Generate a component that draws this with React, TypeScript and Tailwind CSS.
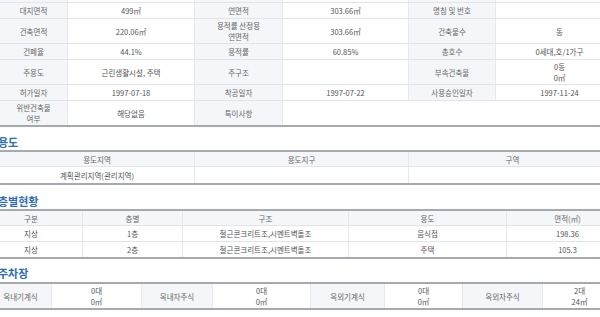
import React from 'react'

// Building register detail: summary grid, zoning, floors, parking
const FONT = "font-['Noto_Sans_CJK_KR','Noto_Sans',sans-serif]"
const LABEL = 'bg-[#f4f6f9] text-[#666]'
const CELL = 'shrink-0 flex flex-col items-center justify-center text-center border-r border-[#e6e8eb] leading-[11px]'

function Row({ h, line = true, children }: { h: string; line?: boolean; children: React.ReactNode }) {
  return <div className={`flex ${h} ${line ? 'border-b border-[#e2e4e7]' : ''}`}>{children}</div>
}

function L({ w, children }: { w: string; children?: React.ReactNode }) {
  return <div className={`${CELL} ${LABEL} ${w}`}>{children}</div>
}

function V({ w, children }: { w: string; children?: React.ReactNode }) {
  return <div className={`${CELL} bg-white text-[#555] ${w}`}>{children}</div>
}

function Title({ pt, h, children }: { pt: string; h: string; children: React.ReactNode }) {
  return (
    <div className={`${h} ${pt}`}>
      <h3 className="-ml-[2px] text-[11px] leading-[14px] font-semibold text-[#2f6db5]">{children}</h3>
    </div>
  )
}

const FLOORS = [
  { gubun: '지상', floor: '1층', structure: '철근콘크리트조,시멘트벽돌조', use: '음식점', area: '198.36' },
  { gubun: '지상', floor: '2층', structure: '철근콘크리트조,시멘트벽돌조', use: '주택', area: '105.3' },
]

export default function App() {
  return (
    <div className={`w-[600px] h-[317px] overflow-hidden bg-white text-[7.5px] ${FONT}`}>
      {/* 기본 개요 */}
      <div className="w-[624px] border-b-2 border-[#a6a9ae]">
        <Row h="h-[3px]">
          <L w="w-[68px]" />
          <V w="w-[127px]" />
          <L w="w-[88px]" />
          <V w="w-[126px]" />
          <L w="w-[87px]" />
          <V w="w-[128px]" />
        </Row>
        <Row h="h-[16px]">
          <L w="w-[68px]">대지면적</L>
          <V w="w-[127px]">499㎡</V>
          <L w="w-[88px]">연면적</L>
          <V w="w-[126px]">303.66㎡</V>
          <L w="w-[87px]">명칭 및 번호</L>
          <V w="w-[128px]" />
        </Row>
        <Row h="h-[25px]">
          <L w="w-[68px]">건축면적</L>
          <V w="w-[127px]">220.06㎡</V>
          <L w="w-[88px]"><span>용적률 산정용</span><span>연면적</span></L>
          <V w="w-[126px]">303.66㎡</V>
          <L w="w-[87px]">건축물수</L>
          <V w="w-[128px]">동</V>
        </Row>
        <Row h="h-[16px]">
          <L w="w-[68px]">건폐율</L>
          <V w="w-[127px]">44.1%</V>
          <L w="w-[88px]">용적률</L>
          <V w="w-[126px]">60.85%</V>
          <L w="w-[87px]">총호수</L>
          <V w="w-[128px]">0세대,호/1가구</V>
        </Row>
        <Row h="h-[25px]">
          <L w="w-[68px]">주용도</L>
          <V w="w-[127px]">근린생활시설, 주택</V>
          <L w="w-[88px]">주구조</L>
          <V w="w-[126px]" />
          <L w="w-[87px]">부속건축물</L>
          <V w="w-[128px]"><span>0동</span><span>0㎡</span></V>
        </Row>
        <Row h="h-[16px]">
          <L w="w-[68px]">허가일자</L>
          <V w="w-[127px]">1997-07-18</V>
          <L w="w-[88px]">착공일자</L>
          <V w="w-[126px]">1997-07-22</V>
          <L w="w-[87px]">사용승인일자</L>
          <V w="w-[128px]">1997-11-24</V>
        </Row>
        <Row h="h-[24px]" line={false}>
          <L w="w-[68px]"><span>위반건축물</span><span>여부</span></L>
          <V w="w-[127px]">해당없음</V>
          <L w="w-[88px]">특이사항</L>
          <V w="w-[341px]" />
        </Row>
      </div>

      {/* 용도 */}
      <Title h="h-[23px]" pt="pt-[8px]">용도</Title>
      <div className="w-[617px] border-y-2 border-[#a6a9ae]">
        <Row h="h-[15px]">
          <L w="w-[195px]">용도지역</L>
          <L w="w-[214px]">용도지구</L>
          <L w="w-[208px]">구역</L>
        </Row>
        <Row h="h-[16px]" line={false}>
          <V w="w-[195px]">계획관리지역(관리지역)</V>
          <V w="w-[214px]" />
          <V w="w-[208px]" />
        </Row>
      </div>

      {/* 층별현황 */}
      <Title h="h-[24px]" pt="pt-[9px]">층별현황</Title>
      <div className="w-[629px] border-y-2 border-[#a6a9ae]">
        <Row h="h-[15px]">
          <L w="w-[83px] pr-[20px]">구분</L>
          <L w="w-[100px]">층별</L>
          <L w="w-[166px]">구조</L>
          <L w="w-[158px]">용도</L>
          <L w="w-[122px]">면적(㎡)</L>
        </Row>
        {FLOORS.map((f, i) => (
          <Row key={i} h={i === 0 ? 'h-[16px]' : 'h-[15px]'} line={i === 0}>
            <V w="w-[83px] pr-[20px]">{f.gubun}</V>
            <V w="w-[100px]">{f.floor}</V>
            <V w="w-[166px]">{f.structure}</V>
            <V w="w-[158px]">{f.use}</V>
            <V w="w-[122px]">{f.area}</V>
          </Row>
        ))}
      </div>

      {/* 주차장 */}
      <Title h="h-[23px]" pt="pt-[7px]">주차장</Title>
      <div className="w-[617px] border-y-2 border-[#a6a9ae]">
        <Row h="h-[24px]" line={false}>
          <L w="w-[52px] pr-[10px]">옥내기계식</L>
          <V w="w-[90px]"><span>0대</span><span>0㎡</span></V>
          <L w="w-[71px]">옥내자주식</L>
          <V w="w-[98px]"><span>0대</span><span>0㎡</span></V>
          <L w="w-[74px]">옥외기계식</L>
          <V w="w-[78px]"><span>0대</span><span>0㎡</span></V>
          <L w="w-[80px]">옥외자주식</L>
          <V w="w-[74px]"><span>2대</span><span>24㎡</span></V>
        </Row>
      </div>
    </div>
  )
}
